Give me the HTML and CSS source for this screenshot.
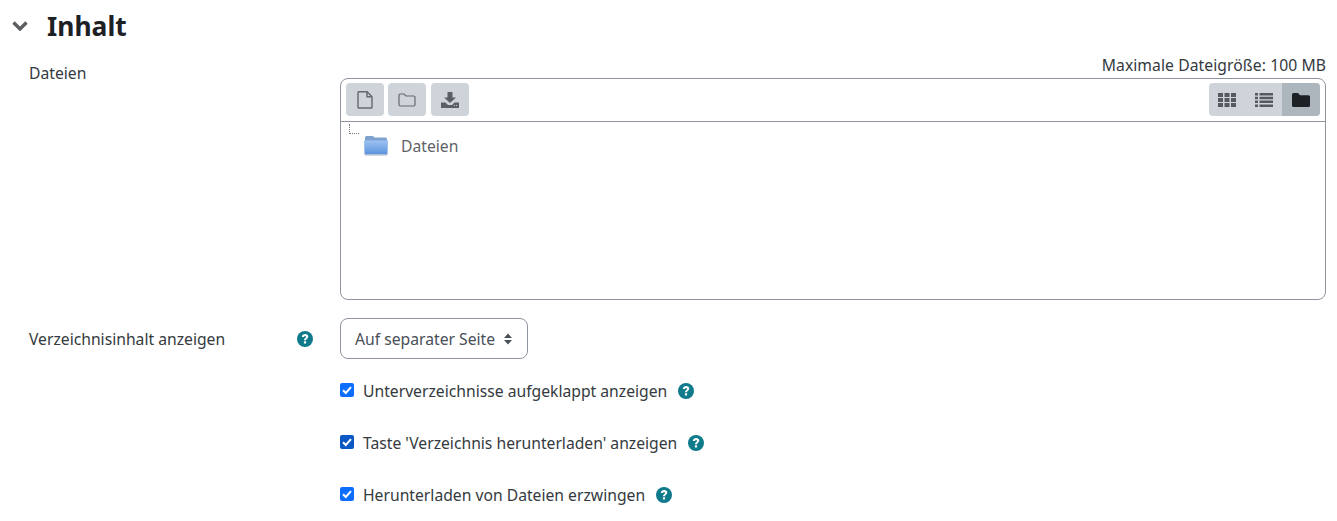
FILE: index.html
```html
<!DOCTYPE html>
<html lang="de">
  <head>
    <meta charset="UTF-8" />
    <title>Inhalt</title>
    <link rel="stylesheet" href="styles.css">
  </head>
  <body>
    <div class="section-head">
      <svg class="chevron" viewBox="0 0 16 10" width="16" height="10"><path d="M1.500 1.500 8 8 14.500 1.500" fill="none" stroke="#5a5f63" stroke-width="3.400"/></svg>
      <h2>Inhalt</h2>
    </div>

    <div class="form-row row-files">
      <div class="label-col">Dateien</div>
      <div class="field-col">
        <div class="max-size">Maximale Dateigröße: 100 MB</div>
        <div class="filemanager">
          <div class="fm-toolbar">
            <div class="fm-buttons">
              <button class="fm-btn" aria-label="Datei">
                <svg viewBox="0 0 16 18" width="16" height="18"><path d="M1 1.500a.8.8 0 0 1 .8-.8H10L15 5.700V16.200a.8.8 0 0 1-.8.8H1.800a.8.8 0 0 1-.8-.8ZM10 .7V5.700H15" fill="none" stroke="#64696e" stroke-width="1.400"/></svg>
              </button>
              <button class="fm-btn" aria-label="Verzeichnis">
                <svg viewBox="0 0 18 14" width="18" height="14"><path d="M1 2.200a1.200 1.200 0 0 1 1.200-1.200H6L8 3H15.800A1.200 1.200 0 0 1 17 4.200V11.800A1.200 1.200 0 0 1 15.800 13H2.200A1.200 1.200 0 0 1 1 11.800Z" fill="none" stroke="#64696e" stroke-width="1.200"/></svg>
              </button>
              <button class="fm-btn fm-btn-last" aria-label="Herunterladen">
                <svg viewBox="0 0 18 16" width="18" height="16"><path d="M6.500 0h5v5.500H15L9 11 3 5.500h3.500ZM0 10.500h4.500L7 13h4l2.500-2.500H18V16H0Z" fill="#5a5f63"/><path d="M13 13.500h1M15 13.500h1" stroke="#cfd4da"/></svg>
              </button>
            </div>
            <div class="view-switch">
              <span class="view-btn">
                <svg viewBox="0 0 18 14" width="18" height="14"><path d="M0 0h5v4H0ZM6.500 0h5v4h-5ZM13 0h5v4h-5ZM0 5h5v4H0ZM6.500 5h5v4h-5ZM13 5h5v4h-5ZM0 10h5v4H0ZM6.500 10h5v4h-5ZM13 10h5v4h-5Z" fill="#565a5f"/></svg>
              </span>
              <span class="view-btn">
                <svg viewBox="0 0 18 14" width="18" height="14"><path d="M0 0h3v2.500H0ZM4.500 0H18v2.500H4.500ZM0 3.800h3v2.500H0ZM4.500 3.800H18v2.500H4.500ZM0 7.600h3v2.500H0ZM4.500 7.600H18v2.500H4.500ZM0 11.400h3v2.500H0ZM4.500 11.400H18v2.500H4.500Z" fill="#565a5f"/></svg>
              </span>
              <span class="view-btn is-active">
                <svg viewBox="0 0 18 14" width="18" height="14"><path d="M0 1.500A1.500 1.500 0 0 1 1.500 0H6l2 2.200h8.500A1.500 1.500 0 0 1 18 3.700V12.500A1.500 1.500 0 0 1 16.500 14H1.500A1.500 1.500 0 0 1 0 12.500Z" fill="#1d2125"/></svg>
              </span>
            </div>
          </div>
          <div class="fm-tree">
            <span class="tree-line"></span>
            <svg class="folder" viewBox="0 0 26 22" width="26" height="22">
              <defs><linearGradient id="fold" x1="0" y1="0" x2="0" y2="1"><stop offset="0" stop-color="#9cc2f2"/><stop offset="1" stop-color="#5b93dd"/></linearGradient></defs>
              <path d="M2 3.500A1.500 1.500 0 0 1 3.500 2H10l1.500 1.500H22.500A1.500 1.500 0 0 1 24 5v3H2Z" fill="#7fa1cf"/>
              <path d="M1 6.500H25L24.500 19a1.500 1.500 0 0 1-1.500 1.500H3A1.500 1.500 0 0 1 1.500 19Z" fill="url(#fold)"/>
              <path d="M1.500 19.500c0 1 .8 1.500 1.500 1.500H23c.8 0 1.500-.5 1.500-1.500" fill="none" stroke="#a9b4c2"/>
            </svg>
            <span class="folder-name">Dateien</span>
          </div>
        </div>
      </div>
    </div>

    <div class="form-row row-select">
      <div class="label-col">
        <span>Verzeichnisinhalt anzeigen</span>
        <svg class="help"><use href="#help-icon"/></svg>
      </div>
      <div class="field-col">
        <div class="select-box">
          <span>Auf separater Seite</span>
          <svg viewBox="0 0 10 14" width="10" height="14"><path d="M5 1.500 9 6H1ZM5 12.500 1 8H9Z" fill="#495057"/></svg>
        </div>
      </div>
    </div>

    <div class="check-row">
      <span class="checkbox"><svg viewBox="0 0 14 14" width="14" height="14"><path d="M3 7.200 5.800 10 11 4.200" fill="none" stroke="#fff" stroke-width="2"/></svg></span>
      <span>Unterverzeichnisse aufgeklappt anzeigen</span>
      <svg class="help"><use href="#help-icon"/></svg>
    </div>
    <div class="check-row">
      <span class="checkbox is-focus"><svg viewBox="0 0 14 14" width="14" height="14"><path d="M3 7.200 5.800 10 11 4.200" fill="none" stroke="#fff" stroke-width="2"/></svg></span>
      <span>Taste 'Verzeichnis herunterladen' anzeigen</span>
      <svg class="help"><use href="#help-icon"/></svg>
    </div>
    <div class="check-row">
      <span class="checkbox"><svg viewBox="0 0 14 14" width="14" height="14"><path d="M3 7.200 5.800 10 11 4.200" fill="none" stroke="#fff" stroke-width="2"/></svg></span>
      <span>Herunterladen von Dateien erzwingen</span>
      <svg class="help"><use href="#help-icon"/></svg>
    </div>

    <svg width="0" height="0" class="defs">
      <symbol id="help-icon" viewBox="0 0 16 16">
        <circle cx="8" cy="8" r="8" fill="#0f7a8a"/>
        <path d="M4.800 6C4.900 4.200 6.300 3.100 8.100 3.100 10 3.100 11.300 4.200 11.300 5.800 11.300 7.600 9.100 7.800 9.100 9.300H6.900C6.900 7.200 9 7 9 5.900 9 5.400 8.600 5.100 8.100 5.100 7.500 5.100 7.100 5.500 7 6ZM6.900 10.200H9.100V12.400H6.900Z" fill="#fff"/>
      </symbol>
    </svg>
  </body>
</html>
```

FILE: styles.css
```css
body {
  margin: 0;
  padding: 0 11px 0 0;
  font-family: "Noto Sans", "Open Sans", sans-serif;
  font-size: 15.7px;
  color: #343a40;
  background: #fff;
}

.section-head {
  display: flex;
  align-items: center;
  height: 52px;
  padding-left: 12px;
}

.chevron {
  margin-right: 19px;
}

h2 {
  margin: 0;
  font-size: 26.4px;
  font-weight: 700;
  color: #1d2125;
}

.form-row {
  display: flex;
}

.label-col {
  width: 340px;
  flex: none;
  box-sizing: border-box;
  padding-left: 29px;
  padding-right: 27px;
}

.field-col {
  flex: 1;
  min-width: 0;
}

.row-files .label-col {
  padding-top: 10px;
}

.max-size {
  height: 26px;
  line-height: 26px;
  text-align: right;
  letter-spacing: 0.07px;
}

.filemanager {
  height: 220px;
  border: 1px solid #8f959e;
  border-radius: 8px;
}

.fm-toolbar {
  display: flex;
  justify-content: space-between;
  height: 43px;
  box-sizing: border-box;
  padding: 4px 5px;
  border-bottom: 1px solid #8f959e;
}

.fm-buttons {
  display: flex;
  gap: 4px;
}

.fm-btn {
  display: flex;
  align-items: center;
  justify-content: center;
  width: 38px;
  height: 33px;
  padding: 0;
  border: none;
  border-radius: 4px;
  background: #ced4da;
}

.fm-btn-last {
  margin-left: 1px;
}

.view-switch {
  display: flex;
  height: 33px;
  border-radius: 4px;
  background: #ced4da;
  overflow: hidden;
}

.view-btn {
  display: flex;
  align-items: center;
  justify-content: center;
  width: 36.500px;
}

.view-btn.is-active {
  width: 38px;
  background: #adb5bd;
}

.fm-tree {
  position: relative;
  display: flex;
  align-items: center;
  height: 46px;
  padding-left: 22px;
  color: #5f6368;
}

.tree-line {
  position: absolute;
  left: 8px;
  top: 2px;
  width: 9px;
  height: 9px;
  border-left: 1px dotted #777;
  border-bottom: 1px dotted #777;
}

.folder-name {
  margin-left: 12px;
  padding-top: 1px;
}

.row-select {
  margin-top: 18px;
  align-items: center;
}

.row-select .label-col {
  display: flex;
  justify-content: space-between;
  align-items: center;
}

.select-box {
  display: inline-flex;
  align-items: center;
  gap: 8px;
  height: 41px;
  box-sizing: border-box;
  padding: 0 14px 0 14px;
  border: 1px solid #8f959e;
  border-radius: 8px;
  color: #495057;
}

.check-row {
  display: flex;
  align-items: center;
  height: 52px;
  padding-left: 340px;
}

.row-select + .check-row {
  margin-top: 6px;
}

.checkbox {
  display: flex;
  width: 14px;
  height: 14px;
  margin-right: 9px;
  margin-bottom: 2px;
  border-radius: 2px;
  background: #0d6efd;
}

.checkbox.is-focus {
  background: #0b57c4;
}

.help {
  width: 16px;
  height: 16px;
  flex: none;
}

.check-row .help {
  margin-left: 11px;
}

.defs {
  position: absolute;
}
```
